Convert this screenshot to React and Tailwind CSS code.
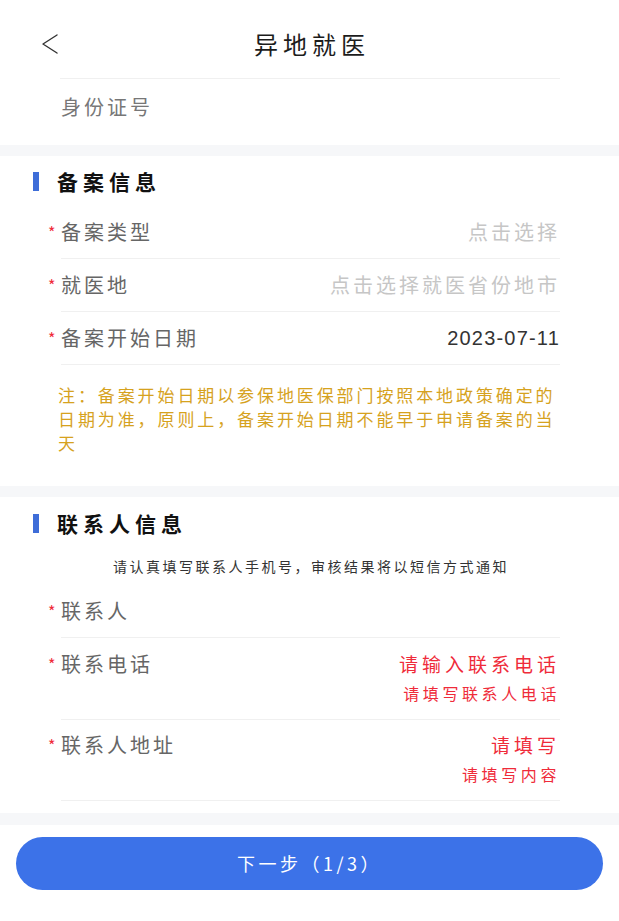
import React from "react";

const CJK = "font-['Noto_Sans_CJK_SC','Noto_Sans',sans-serif]";

function Star() {
  return (
    <span className="-ml-[13px] w-[13px] inline-block text-[#ef2b3a] text-[16px] tracking-normal">*</span>
  );
}

function SectionTitle({ children, h }) {
  return (
    <div className={`flex items-center pl-[33px] ${h}`}>
      <div className="w-[6px] h-[19px] bg-[#3e6dd8]" />
      <div className="ml-[18px] text-[21px] font-bold text-[#111] tracking-[5px] leading-none">{children}</div>
    </div>
  );
}

function SelectRow({ label, children }) {
  return (
    <div className="ml-[61px] mr-[59px] h-[53px] border-b border-[#f0f0f0] flex items-center justify-between">
      <div className="flex items-center text-[20px] tracking-[3px] text-[#666] leading-[24px]">
        <Star />
        <span>{label}</span>
      </div>
      {children}
    </div>
  );
}

function InputRow({ label, primary, secondary, pt }) {
  return (
    <div className={`ml-[61px] mr-[59px] border-b border-[#f0f0f0] flex items-start justify-between ${pt} pb-[15px]`}>
      <div className="flex items-center text-[20px] tracking-[3px] text-[#666] leading-[24px]">
        <Star />
        <span>{label}</span>
      </div>
      <div className="flex flex-col items-end text-[#ef2b3a]">
        <div className="text-[19px] tracking-[4px] leading-[24px]">{primary}</div>
        <div className="mt-[6px] text-[16px] tracking-[3.6px] leading-[22px]">{secondary}</div>
      </div>
    </div>
  );
}

export default function App() {
  return (
    <div className={`w-[619px] min-h-[921px] bg-white ${CJK}`}>
      {/* header */}
      <div className="bg-white">
        <div className="h-[78px] pt-[10px] grid grid-cols-[1fr_auto_1fr] items-center">
          <div className="pl-[42px] flex items-center">
            <svg width="16" height="20" viewBox="0 0 16 20" fill="none">
              <polyline points="15,1 1,10 15,19" stroke="#333" strokeWidth="1.4" strokeLinecap="round" strokeLinejoin="round" />
            </svg>
          </div>
          <div className="text-[24px] tracking-[5px] pl-[5px] text-[#1c1c1c] leading-none">异地就医</div>
          <div />
        </div>
        <div className="ml-[60px] mr-[59px] border-t border-[#f0f0f0] h-[56px] flex items-center pl-[1px] text-[20px] tracking-[3px] text-[#777]">
          身份证号
        </div>
        <div className="h-[11px]" />
      </div>

      <div className="h-[11px] bg-[#f6f7f9]" />

      {/* 备案信息 */}
      <div className="bg-white">
        <SectionTitle h="h-[50px]">备案信息</SectionTitle>
        <SelectRow label="备案类型">
          <span className="text-[20px] tracking-[3px] text-[#c6c6c6]">点击选择</span>
        </SelectRow>
        <SelectRow label="就医地">
          <span className="text-[20px] tracking-[3px] text-[#c6c6c6]">点击选择就医省份地市</span>
        </SelectRow>
        <SelectRow label="备案开始日期">
          <span className="font-['Liberation_Sans',sans-serif] text-[20px] tracking-[1.2px] text-[#333]">2023-07-11</span>
        </SelectRow>
        <div className="ml-[58px] mr-[30px] pt-[18px] pb-[31px] text-[17px] leading-[24px] tracking-[2.9px] text-[#d6a21e] whitespace-nowrap">
          <div>注：备案开始日期以参保地医保部门按照本地政策确定的</div>
          <div>日期为准，原则上，备案开始日期不能早于申请备案的当</div>
          <div>天</div>
        </div>
      </div>

      <div className="h-[11px] bg-[#f6f7f9]" />

      {/* 联系人信息 */}
      <div className="bg-white pb-[12px]">
        <SectionTitle h="h-[52px]">联系人信息</SectionTitle>
        <div className="mt-[7px] mb-[9px] text-center text-[14px] leading-[20px] tracking-[2.5px] pl-[3px] text-[#333]">
          请认真填写联系人手机号，审核结果将以短信方式通知
        </div>
        <div className="ml-[61px] mr-[59px] h-[53px] border-b border-[#f0f0f0] flex items-center">
          <div className="flex items-center text-[20px] tracking-[3px] text-[#666] leading-[24px]">
            <Star />
            <span>联系人</span>
          </div>
        </div>
        <InputRow label="联系电话" primary="请输入联系电话" secondary="请填写联系人电话" pt="pt-[14px]" />
        <InputRow label="联系人地址" primary="请填写" secondary="请填写内容" pt="pt-[13px]" />
      </div>

      <div className="h-[12px] bg-[#f6f7f9]" />

      {/* button */}
      <div className="bg-white pt-[12px] pb-[30px] px-[16px]">
        <button className="w-full h-[53px] rounded-full bg-[#3c72e8] text-white text-[18px] tracking-[3.5px] flex items-center justify-center">
          下一步（1/3）
        </button>
      </div>
    </div>
  );
}
